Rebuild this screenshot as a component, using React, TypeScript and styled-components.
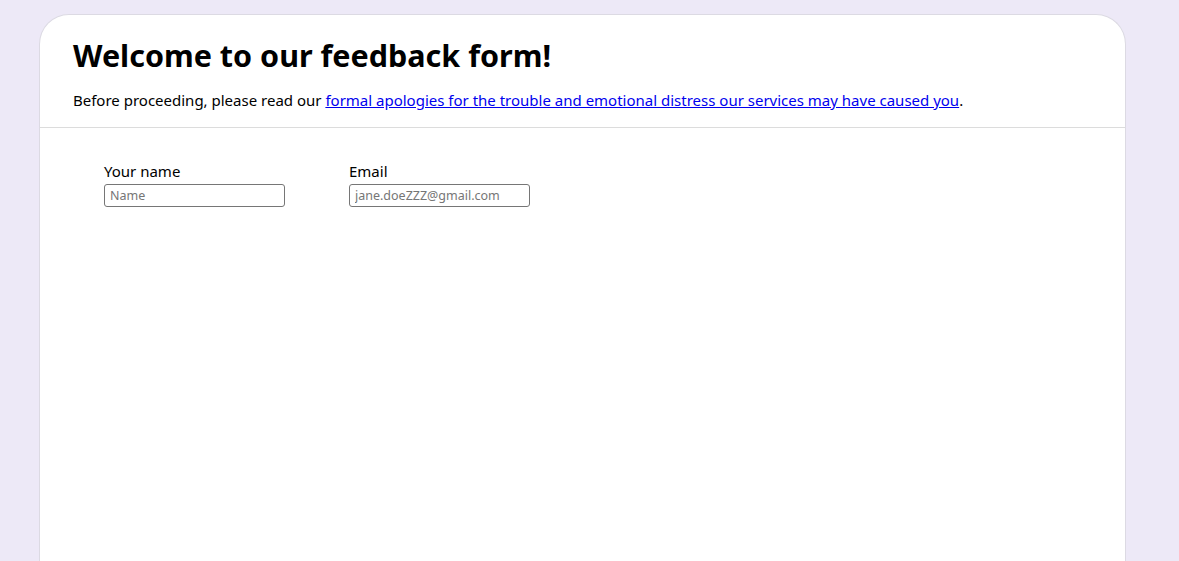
import styled, { createGlobalStyle } from "styled-components";

const GlobalStyle = createGlobalStyle`
    html, body {
        margin: 0;
        padding: 0;
        background-color: #ede9f7;
        font-family: "Noto Sans", "Open Sans", sans-serif;
        color: #000;
        overflow: hidden;
    }
`;

const Page = styled.div`
    padding: 14px 53px 0 39px;
    height: 561px;
    box-sizing: border-box;
`;

const Card = styled.main`
    background-color: #fff;
    border: 1px solid #dcdae3;
    border-bottom: none;
    border-radius: 30px 30px 0 0;
    min-height: 620px;
`;

const Header = styled.header`
    padding: 19px 32px 16px 33px;
    border-bottom: 1px solid #dcdcdc;
`;

const Title = styled.h1`
    margin: 0 0 13px 0;
    font-size: 30.5px;
    font-weight: 700;
    line-height: 42px;
`;

const Intro = styled.p`
    margin: 0;
    font-size: 15px;
    line-height: 22px;

    a {
        color: #0000ee;
        text-decoration: underline;
    }
`;

const Form = styled.form`
    display: flex;
    gap: 64px;
    padding: 33px 64px;
`;

const Field = styled.label`
    display: flex;
    flex-direction: column;
    gap: 3px;
    font-size: 15px;
    line-height: 20px;
`;

const Input = styled.input`
    box-sizing: border-box;
    width: 181px;
    height: 23px;
    padding: 1px 5px;
    border: 1px solid #767676;
    border-radius: 3px;
    font-family: "Noto Sans", "Open Sans", sans-serif;
    font-size: 12.5px;
    outline: none;

    &::placeholder {
        color: #767676;
    }
`;

export default function App() {
    return (
        <>
            <GlobalStyle />
            <Page>
                <Card>
                    <Header>
                        <Title>Welcome to our feedback form!</Title>
                        <Intro>
                            Before proceeding, please read our{" "}
                            <a href="#">
                                formal apologies for the trouble and emotional distress our
                                services may have caused you
                            </a>
                            .
                        </Intro>
                    </Header>
                    <Form>
                        <Field>
                            Your name
                            <Input type="text" placeholder="Name" />
                        </Field>
                        <Field>
                            Email
                            <Input type="email" placeholder="jane.doeZZZ@gmail.com" />
                        </Field>
                    </Form>
                </Card>
            </Page>
        </>
    );
}
